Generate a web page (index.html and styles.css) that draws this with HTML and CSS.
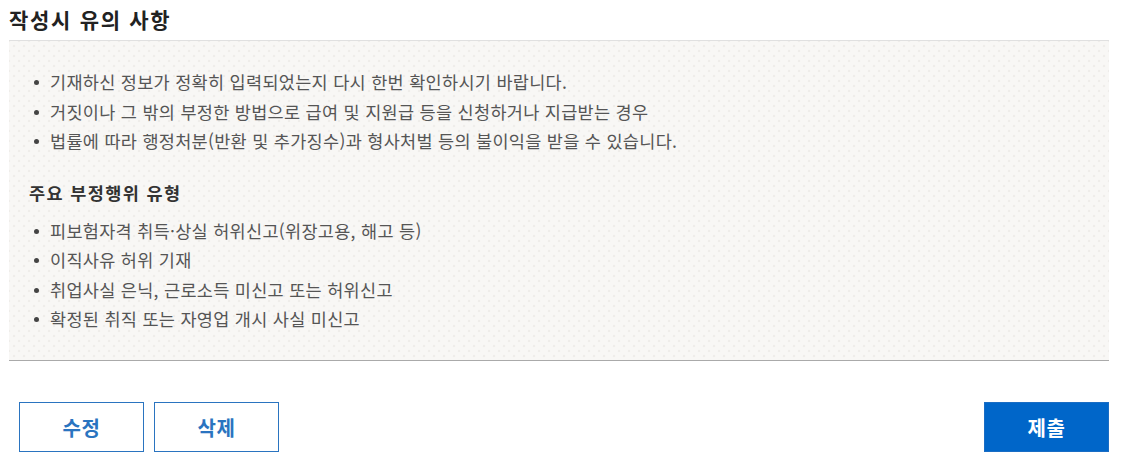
FILE: index.html
```html
<!DOCTYPE html>
<html lang="ko">
<head>
<meta charset="utf-8">
<link rel="stylesheet" href="styles.css">
</head>
<body>
<div class="page">
  <h2 class="title">작성시 유의 사항</h2>
  <div class="notice">
    <ul class="list">
      <li>기재하신 정보가 정확히 입력되었는지 다시 한번 확인하시기 바랍니다.</li>
      <li>거짓이나 그 밖의 부정한 방법으로 급여 및 지원급 등을 신청하거나 지급받는 경우</li>
      <li>법률에 따라 행정처분(반환 및 추가징수)과 형사처벌 등의 불이익을 받을 수 있습니다.</li>
    </ul>
    <h3 class="sub">주요 부정행위 유형</h3>
    <ul class="list">
      <li>피보험자격 취득·상실 허위신고(위장고용, 해고 등)</li>
      <li>이직사유 허위 기재</li>
      <li>취업사실 은닉, 근로소득 미신고 또는 허위신고</li>
      <li>확정된 취직 또는 자영업 개시 사실 미신고</li>
    </ul>
  </div>
  <div class="actions">
    <div class="left">
      <button class="btn outline">수정</button>
      <button class="btn outline">삭제</button>
    </div>
    <button class="btn primary">제출</button>
  </div>
</div>
</body>
</html>
```
FILE: styles.css
```css
* { box-sizing: border-box; }
html, body { margin: 0; padding: 0; background: #fff; }
body {
  font-family: "Noto Sans CJK KR", "Noto Sans", sans-serif;
  color: #555;
}
.page {
  width: 1100px;
  margin-left: 9px;
}
.title {
  margin: 0;
  height: 40px;
  padding-top: 4px;
  font-size: 21px;
  line-height: 30px;
  font-weight: 700;
  color: #222;
  letter-spacing: 1.7px;
}
.notice {
  border-top: 1px solid #e0e0e0;
  border-bottom: 1px solid #aaa;
  background-color: #f8f7f5;
  background-image:
    radial-gradient(circle, #efedea 1.2px, transparent 1.6px),
    radial-gradient(circle, #efedea 1.2px, transparent 1.6px);
  background-size: 10px 10px, 10px 10px;
  background-position: 0 0, 5px 5px;
  padding: 26px 0 22px 24px;
  height: 321px;
}
.list {
  list-style: none;
  margin: 0;
  padding: 0;
}
.list li {
  position: relative;
  padding-left: 17px;
  font-size: 17.5px;
  line-height: 29.5px;
  color: #555;
  letter-spacing: 0.3px;
}
.list li::before {
  content: "";
  position: absolute;
  left: 1px;
  top: 13px;
  width: 5px;
  height: 5px;
  border-radius: 50%;
  background: #444;
}
.sub {
  margin: 25px 0 11px -4px;
  font-size: 17.5px;
  line-height: 24px;
  font-weight: 700;
  color: #333;
  letter-spacing: 1.4px;
}
.actions {
  display: flex;
  justify-content: space-between;
  align-items: center;
  margin-top: 41px;
  padding-left: 10px;
}
.left {
  display: flex;
  gap: 10px;
}
.btn {
  width: 125px;
  height: 50px;
  font-family: "Noto Sans CJK KR", "Noto Sans", sans-serif;
  font-size: 20px;
  font-weight: 700;
  cursor: pointer;
  padding: 0;
  letter-spacing: 0.5px;
}
.outline {
  background: #fff;
  border: 1px solid #2a74c0;
  color: #2a74c0;
}
.primary {
  background: #0066c9;
  border: 1px solid #1a6dc4;
  color: #fff;
}
```
